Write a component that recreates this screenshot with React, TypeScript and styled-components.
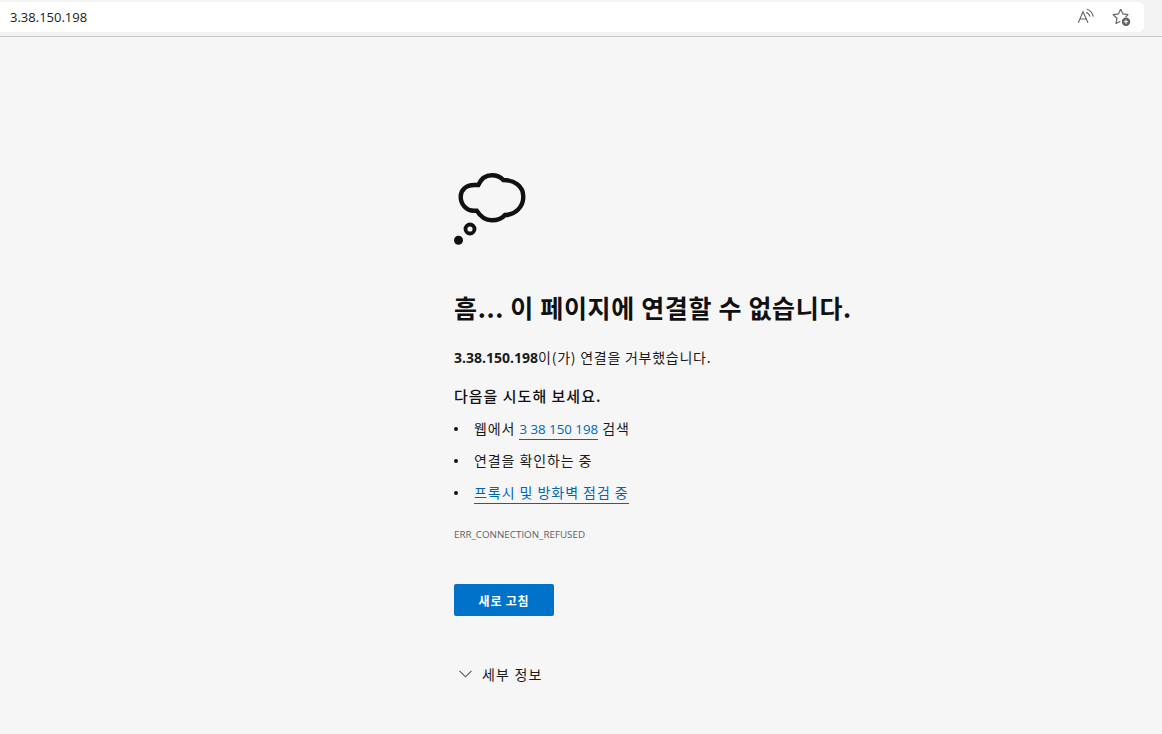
import styled, { createGlobalStyle } from "styled-components";

const GlobalStyle = createGlobalStyle`
  html, body {
    margin: 0;
    height: 100%;
    background: #f6f6f6;
    font-family: "Open Sans", "Noto Sans CJK KR", sans-serif;
  }
  #root { height: 100%; }
`;

const Page = styled.div`
  display: flex;
  flex-direction: column;
  width: 1162px;
  height: 734px;
  overflow: hidden;
`;

const Toolbar = styled.header`
  box-sizing: border-box;
  height: 37px;
  padding: 2px 18px 4px 0;
  background: #f3f3f3;
  border-bottom: 1px solid #c4c4c4;
`;

const AddressBar = styled.div`
  display: flex;
  align-items: center;
  justify-content: space-between;
  height: 30px;
  padding: 0 12px 0 10px;
  background: #fff;
  border-radius: 0 6px 6px 0;
`;

const Url = styled.span`
  font-size: 13px;
  color: #1a1a1a;
`;

const ToolIcons = styled.div`
  display: flex;
  align-items: center;
  gap: 17px;
`;

const Content = styled.main`
  flex: 1;
  display: flex;
  flex-direction: column;
  align-items: flex-start;
  padding: 134px 0 0 454px;
`;

const Cloud = styled.svg`
  display: block;
  margin-bottom: 44px;
`;

const Title = styled.h1`
  margin: 0 0 24px;
  font-family: "Noto Sans CJK KR", sans-serif;
  font-size: 25px;
  line-height: 32px;
  font-weight: 700;
  letter-spacing: 0.65px;
  color: #111;
`;

const Message = styled.p`
  margin: 0 0 17px;
  font-family: "Noto Sans CJK KR", sans-serif;
  font-size: 14px;
  line-height: 20px;
  letter-spacing: 0.75px;
  color: #1a1a1a;

  strong {
    font-family: "Open Sans", sans-serif;
    font-weight: 700;
    letter-spacing: 0;
  }
`;

const Subtitle = styled.h2`
  margin: 0 0 11px;
  font-family: "Noto Sans CJK KR", sans-serif;
  font-size: 15px;
  line-height: 22px;
  font-weight: 500;
  letter-spacing: 1px;
  color: #111;
`;

const Tips = styled.ul`
  list-style: none;
  margin: 0 0 14px;
  padding: 0;
`;

const Tip = styled.li`
  position: relative;
  height: 32px;
  padding-left: 20px;
  font-family: "Noto Sans CJK KR", sans-serif;
  font-size: 14px;
  line-height: 20px;
  letter-spacing: 0.9px;
  color: #1a1a1a;

  &::before {
    content: "";
    position: absolute;
    left: 0;
    top: 9px;
    width: 4px;
    height: 4px;
    border-radius: 50%;
    background: #111;
  }
`;

const TipLink = styled.a<{ $numeric?: boolean }>`
  color: #0067b8;
  border-bottom: 1px solid #0067b8;
  padding-bottom: 1px;
  font-family: ${(props) => (props.$numeric ? '"Open Sans", sans-serif' : '"Noto Sans CJK KR", sans-serif')};
  font-size: ${(props) => (props.$numeric ? "13.300px" : "14px")};
  letter-spacing: ${(props) => (props.$numeric ? "0" : "0.95px")};
`;

const ErrorCode = styled.div`
  margin-bottom: 42px;
  font-size: 9.800px;
  line-height: 14px;
  color: #5f5f5f;
`;

const ReloadButton = styled.button`
  box-sizing: border-box;
  width: 100px;
  height: 32px;
  margin-bottom: 48px;
  border: none;
  border-radius: 2px;
  background: #0072c9;
  color: #fff;
  font-family: "Noto Sans CJK KR", sans-serif;
  font-size: 12px;
  font-weight: 700;
  letter-spacing: 0.8px;
`;

const Details = styled.div`
  display: flex;
  align-items: center;
  gap: 10px;
  padding-left: 5px;
  font-family: "Noto Sans CJK KR", sans-serif;
  font-size: 14px;
  line-height: 20px;
  letter-spacing: 1.2px;
  color: #1a1a1a;
`;

export default function App() {
  return (
    <Page>
      <GlobalStyle />
      <Toolbar>
        <AddressBar>
          <Url>3.38.150.198</Url>
          <ToolIcons>
            <svg width="20" height="20" viewBox="0 0 20 20" fill="none" stroke="#666" strokeWidth="1.100">
              <path d="M3.300 15.700 8 4.700 13 15.700M4.800 12h6.700" />
              <path d="M11 5.500c2 .5 3.400 2 4 4M11.700 2.300c3 .7 5.700 3.500 6.600 7.400" />
            </svg>
            <svg width="20" height="20" viewBox="0 0 20 20" fill="none">
              <path d="M8.700 2.300 11 6.900l5 .7-2.400 2.400M8.700 2.300 6.400 6.900l-5.200.8 3.700 3.600-.9 5.200 4.300-2.200" stroke="#666" strokeWidth="1.200" strokeLinejoin="round" />
              <circle cx="14" cy="14.700" r="4.200" fill="#5f5f5f" />
              <path d="M14 12.500v4.400M11.800 14.700h4.400" stroke="#fff" strokeWidth="1" />
            </svg>
          </ToolIcons>
        </AddressBar>
      </Toolbar>
      <Content>
        <Cloud width="74" height="76" viewBox="0 0 74 76" fill="none">
          <path
            d="M24.300 14C27 8 32 4.300 37.700 4.300C42.500 4.300 46.500 6 49.300 9C60 9 69.300 15 69.300 25.700C69.300 36 61 44 51 44C48 47.500 43 49.300 37.700 49.300C31 49.300 26 45 22.700 39.700L20 39.700C12 39.700 6.700 33 6.700 25.700C6.700 19 12 14 20 14Z"
            stroke="#111"
            strokeWidth="4.400"
          />
          <circle cx="16" cy="58" r="4.500" stroke="#111" strokeWidth="3.800" />
          <circle cx="4.500" cy="69.300" r="4.500" fill="#111" />
        </Cloud>
        <Title>흠... 이 페이지에 연결할 수 없습니다.</Title>
        <Message>
          <strong>3.38.150.198</strong>이(가) 연결을 거부했습니다.
        </Message>
        <Subtitle>다음을 시도해 보세요.</Subtitle>
        <Tips>
          <Tip>
            웹에서 <TipLink $numeric>3 38 150 198</TipLink> 검색
          </Tip>
          <Tip>연결을 확인하는 중</Tip>
          <Tip>
            <TipLink>프록시 및 방화벽 점검 중</TipLink>
          </Tip>
        </Tips>
        <ErrorCode>ERR_CONNECTION_REFUSED</ErrorCode>
        <ReloadButton>새로 고침</ReloadButton>
        <Details>
          <svg width="13" height="8" viewBox="0 0 13 8" fill="none" stroke="#555" strokeWidth="1.100">
            <path d="M.5.8 6.500 6.800 12.500.8" />
          </svg>
          세부 정보
        </Details>
      </Content>
    </Page>
  );
}
